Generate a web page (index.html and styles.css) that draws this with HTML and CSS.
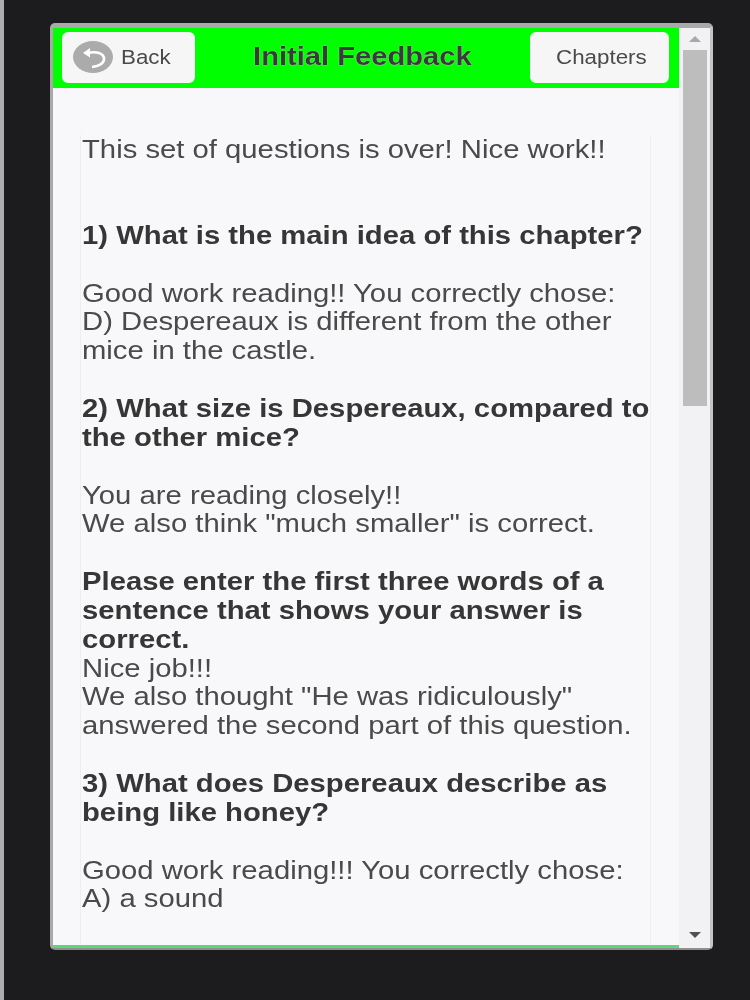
FILE: index.html
```html
<!DOCTYPE html>
<html lang="en">
<head>
    <meta charset="UTF-8">
    <meta name="viewport" content="width=device-width, initial-scale=1.0">
    <title>Initial Feedback</title>
    <link rel="stylesheet" href="styles.css">
</head>
<body>
    <div class="window">
        <div class="page">
            <div class="header">
                <div class="button back">
                    <svg class="back-icon" viewBox="0 0 40 32">
                        <ellipse cx="20" cy="16" rx="20" ry="16" fill="#ababab"/>
                        <path d="M17 7 L10 12 L17 16.5 Z" fill="#fff"/>
                        <path d="M15 12 C23 10 31 12 31 18 C31 23 26 25 19 26" fill="none" stroke="#fff" stroke-width="2.6"/>
                    </svg>
                    <span class="wide">Back</span>
                </div>
                <div class="title">Initial Feedback</div>
                <div class="button chapters"><span class="wide">Chapters</span></div>
            </div>
            <div class="content">
                <div class="feedback">
                    <div class="wide-text">
                        <p class="intro">This set of questions is over! Nice work!!</p>
                        <p class="question">1) What is the main idea of this chapter?</p>
                        <p>Good work reading!! You correctly chose:<br>D) Despereaux is different from the other mice in the castle.</p>
                        <p class="question">2) What size is Despereaux, compared to the other mice?</p>
                        <p>You are reading closely!!<br>We also think "much smaller" is correct.</p>
                        <p><b>Please enter the first three words of a sentence that shows your answer is correct.</b><br>Nice job!!!<br>We also thought "He was ridiculously" answered the second part of this question.</p>
                        <p class="question">3) What does Despereaux describe as being like honey?</p>
                        <p>Good work reading!!! You correctly chose:<br>A) a sound</p>
                    </div>
                </div>
            </div>
        </div>
        <div class="scrollbar">
            <div class="arrow up"></div>
            <div class="track"><div class="thumb"></div></div>
            <div class="arrow down"></div>
        </div>
    </div>
</body>
</html>
```

FILE: styles.css
```css
body {
    margin: 0;
    height: 1000px;
    box-sizing: border-box;
    padding: 23px 0 0 46px;
    background-color: #1c1c1e;
    border-left: 4px solid #adadad;
    font-family: "Liberation Sans", Arial, sans-serif;
    color: #4a4a4a;
    overflow: hidden;
}

.window {
    display: flex;
    width: 663px;
    height: 927px;
    box-sizing: border-box;
    background-color: #f8f8fa;
    border: 3px solid #a9a9a9;
    border-top-width: 5px;
    border-right-color: #c4c4c6;
    border-bottom-width: 2px;
    border-bottom-color: #8f8f8f;
    border-radius: 5px;
    filter: blur(0.6px);
}

.page {
    display: flex;
    flex-direction: column;
    width: 626px;
    border-bottom: 3px solid #62d676;
}

.header {
    display: flex;
    align-items: flex-start;
    justify-content: space-between;
    height: 60px;
    box-sizing: border-box;
    flex-shrink: 0;
    padding: 4px 10px 0 9px;
    background-color: #00ff00;
}

.button {
    display: flex;
    align-items: center;
    height: 51px;
    box-sizing: border-box;
    padding-bottom: 1px;
    background-color: #f6f6f6;
    border-radius: 6px;
    font-size: 20.5px;
}

.wide {
    display: inline-block;
    transform: scaleX(1.09);
    transform-origin: left;
}

.back {
    width: 133px;
    gap: 8px;
    padding-left: 11px;
}

.back-icon {
    width: 40px;
    height: 32px;
}

.chapters {
    width: 139px;
    padding-left: 26px;
}

.title {
    margin-top: 9px;
    font-size: 26.5px;
    font-weight: bold;
    color: #3a3a3a;
    text-shadow: 0 0 1px #fff;
    transform: scaleX(1.1);
}

.content {
    flex: 1;
    overflow: hidden;
    padding: 47px 28px 0 27px;
}

.feedback {
    height: 100%;
    padding-left: 1px;
    border-left: 1px solid #eee;
    border-right: 1px solid #f0f0f0;
    font-size: 26.5px;
    line-height: 28.85px;
}

.wide-text {
    width: 514px;
    transform: scaleX(1.104);
    transform-origin: left top;
}

p {
    margin: 0 0 28.85px;
}

.intro {
    margin-bottom: 57.1px;
}

.question {
    font-weight: bold;
}

b, .question {
    color: #363636;
}

.scrollbar {
    display: flex;
    flex-direction: column;
    width: 31px;
    align-items: center;
    background-color: #f2f2f4;
}

.arrow {
    width: 0;
    height: 0;
    border-left: 6px solid transparent;
    border-right: 6px solid transparent;
}

.up {
    margin: 8px 0 8px;
    border-bottom: 6px solid #a8a8a8;
}

.down {
    margin: 8px 0 10px;
    border-top: 6px solid #505050;
}

.track {
    flex: 1;
    width: 24px;
}

.thumb {
    height: 356px;
    background-color: #bdbdbd;
}
```
